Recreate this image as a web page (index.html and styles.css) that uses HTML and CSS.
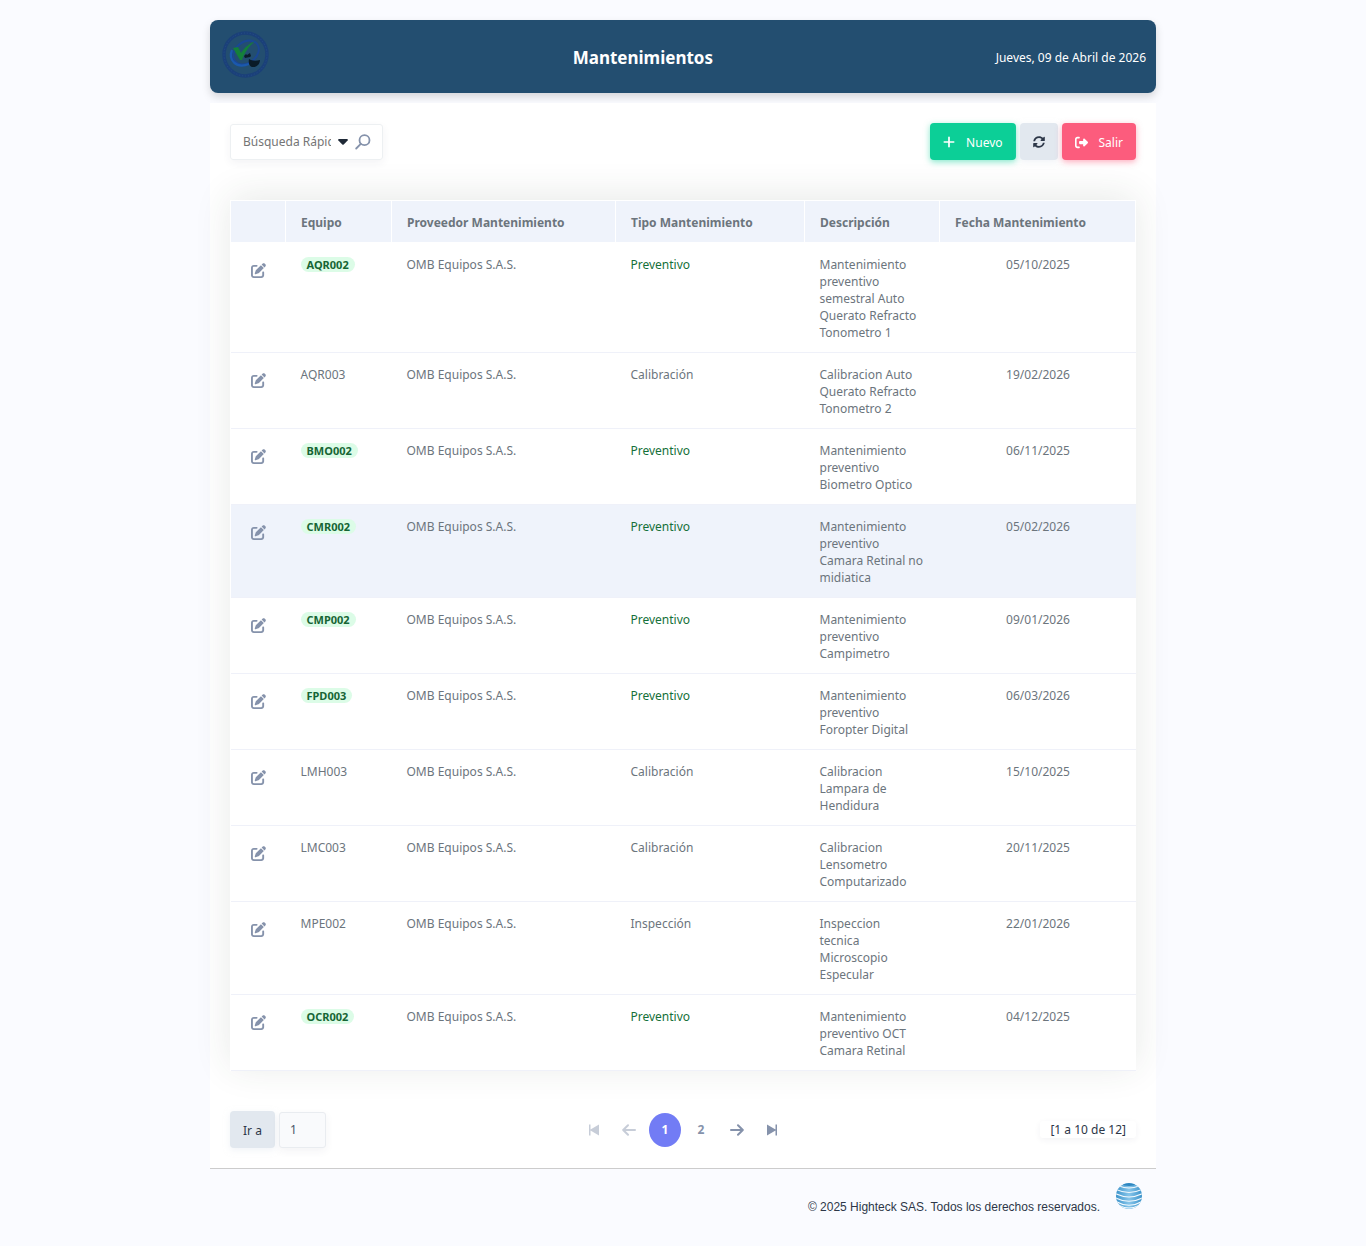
FILE: index.html
```html
<!DOCTYPE html>
<html lang="es">
<head>
  <meta charset="UTF-8" />
  <meta name="viewport" content="width=device-width, initial-scale=1" />
  <title>Mantenimientos</title>
  <link rel="stylesheet" href="styles.css">
</head>
<body>

  <svg class="sprite" aria-hidden="true">
    <symbol id="i-edit" viewBox="0 0 512 512"><path d="M471.6 21.7c-21.9-21.9-57.3-21.9-79.2 0L362.3 51.7l97.9 97.9 30.1-30.1c21.9-21.9 21.9-57.3 0-79.2L471.6 21.7zm-299.2 220c-6.1 6.1-10.8 13.6-13.5 21.9l-29.6 88.8c-2.9 8.6-.6 18.1 5.8 24.6s15.9 8.7 24.6 5.8l88.8-29.6c8.2-2.7 15.7-7.4 21.9-13.5L437.7 172.3 339.7 74.3 172.4 241.7zM96 64C43 64 0 107 0 160V416c0 53 43 96 96 96H352c53 0 96-43 96-96V320c0-17.7-14.3-32-32-32s-32 14.3-32 32v96c0 17.7-14.3 32-32 32H96c-17.7 0-32-14.3-32-32V160c0-17.7 14.3-32 32-32h96c17.7 0 32-14.3 32-32s-14.3-32-32-32H96z"/></symbol>
  </svg>

  <div class="page">
    <header class="header">
      <div class="logo">
        <svg width="50" height="50" viewBox="0 0 50 50" role="img" aria-label="Logo">
          <circle cx="25.500" cy="24.500" r="21.500" fill="none" stroke="#1b4079" stroke-width="3.400"/>
          <circle cx="25.500" cy="24.500" r="21.500" fill="none" stroke="#25508a" stroke-width="1" stroke-dasharray="1 2"/>
          <ellipse cx="26" cy="22.500" rx="14" ry="10.500" transform="rotate(-38 26 22.500)" fill="none" stroke="#1a4796" stroke-width="2"/>
          <path d="M12 20c-4 10 4 19 17 14" fill="none" stroke="#1b59ad" stroke-width="2.200"/>
          <path d="M13 18l5-1 3 6c4-6 8-9 14-12-6 5-10 11-13 19h-2z" fill="#14803a"/>
          <path d="M24 26l2-2 1 1 3-2 1 3-1 1-5 1zM29 29c3 2 7 2 11 1 0 4-3 7-7 7-3 0-5-3-4-8z" fill="#0a1b28"/>
        </svg>
      </div>
      <h1>Mantenimientos</h1>
      <span class="date">Jueves, 09 de Abril de 2026</span>
    </header>

    <main class="content">
      <div class="toolbar">
        <div class="search">
          <input type="text" placeholder="Búsqueda Rápida" aria-label="Búsqueda Rápida">
          <button type="button" aria-label="Campos de búsqueda">
            <svg width="10" height="6" viewBox="0 0 10 6"><path d="M1 0h8c.8 0 1.100.8.600 1.400L5.700 5.500a1 1 0 0 1-1.400 0L.4 1.400C-.1.800.2 0 1 0z" fill="#1f2937"/></svg>
          </button>
          <button type="button" aria-label="Buscar">
            <svg width="16" height="16" viewBox="0 0 16 16" fill="none" stroke="#8592ab" stroke-width="1.800" stroke-linecap="round"><circle cx="9.500" cy="6.200" r="5"/><path d="M5.800 9.900L1.200 14.500"/></svg>
          </button>
        </div>
        <div class="actions">
          <button type="button" class="btn btn-new">
            <svg width="12" height="14" viewBox="0 0 448 512" fill="currentColor"><path d="M256 80c0-17.700-14.300-32-32-32s-32 14.300-32 32V224H48c-17.700 0-32 14.300-32 32s14.300 32 32 32H192V432c0 17.700 14.300 32 32 32s32-14.300 32-32V288H400c17.700 0 32-14.300 32-32s-14.300-32-32-32H256V80z"/></svg>
            Nuevo
          </button>
          <button type="button" class="btn btn-light" aria-label="Actualizar">
            <svg width="12" height="12" viewBox="0 0 512 512" fill="currentColor"><path d="M370.72 133.28C339.458 104.008 298.888 87.962 255.848 88c-77.458.068-144.328 53.178-162.791 126.85-1.344 5.363-6.122 9.15-11.651 9.15H24.103c-7.498 0-13.194-6.807-11.807-14.176C33.933 94.924 134.813 8 256 8c66.448 0 126.791 26.136 171.315 68.685L463.03 40.97C478.149 25.851 504 36.559 504 57.941V192c0 13.255-10.745 24-24 24H345.941c-21.382 0-32.09-25.851-16.971-40.971l41.75-41.749zM32 296h134.059c21.382 0 32.09 25.851 16.971 40.971l-41.75 41.75c31.262 29.273 71.835 45.319 114.876 45.28 77.418-.07 144.315-53.144 162.787-126.849 1.344-5.363 6.122-9.15 11.651-9.15h57.304c7.498 0 13.194 6.807 11.807 14.176C478.067 417.076 377.187 504 256 504c-66.448 0-126.791-26.136-171.315-68.685L48.97 471.03C33.851 486.149 8 475.441 8 454.059V320c0-13.255 10.745-24 24-24z"/></svg>
          </button>
          <button type="button" class="btn btn-exit">
            <svg width="13" height="13" viewBox="0 0 512 512" fill="currentColor"><path d="M377.9 105.9L500.7 228.7c7.2 7.2 11.3 17.1 11.3 27.3s-4.1 20.1-11.3 27.3L377.9 406.1c-6.4 6.4-15 9.9-24 9.9c-18.7 0-33.9-15.2-33.9-33.9l0-62.1-128 0c-17.7 0-32-14.3-32-32l0-64c0-17.7 14.3-32 32-32l128 0 0-62.1c0-18.7 15.2-33.9 33.9-33.9c9 0 17.6 3.6 24 9.9zM160 96L96 96c-17.7 0-32 14.3-32 32l0 256c0 17.7 14.3 32 32 32l64 0c17.7 0 32 14.3 32 32s-14.3 32-32 32l-64 0c-53 0-96-43-96-96L0 128C0 75 43 32 96 32l64 0c17.7 0 32 14.3 32 32s-14.3 32-32 32z"/></svg>
            Salir
          </button>
        </div>
      </div>

      <table class="grid">
        <colgroup>
          <col class="c-edit"><col class="c-equipo"><col class="c-prov"><col class="c-tipo"><col class="c-desc"><col>
        </colgroup>
        <thead>
          <tr>
            <th></th>
            <th>Equipo</th>
            <th>Proveedor Mantenimiento</th>
            <th>Tipo Mantenimiento</th>
            <th>Descripción</th>
            <th>Fecha Mantenimiento</th>
          </tr>
        </thead>
        <tbody>
          <tr>
            <td><a href="#" class="edit" aria-label="Editar"><svg><use href="#i-edit"/></svg></a></td>
            <td><span class="badge">AQR002</span></td>
            <td>OMB Equipos S.A.S.</td>
            <td class="preventivo">Preventivo</td>
            <td>Mantenimiento preventivo semestral Auto Querato Refracto Tonometro 1</td>
            <td class="fecha">05/10/2025</td>
          </tr>
          <tr>
            <td><a href="#" class="edit" aria-label="Editar"><svg><use href="#i-edit"/></svg></a></td>
            <td>AQR003</td>
            <td>OMB Equipos S.A.S.</td>
            <td>Calibración</td>
            <td>Calibracion Auto Querato Refracto Tonometro 2</td>
            <td class="fecha">19/02/2026</td>
          </tr>
          <tr>
            <td><a href="#" class="edit" aria-label="Editar"><svg><use href="#i-edit"/></svg></a></td>
            <td><span class="badge">BMO002</span></td>
            <td>OMB Equipos S.A.S.</td>
            <td class="preventivo">Preventivo</td>
            <td>Mantenimiento preventivo Biometro Optico</td>
            <td class="fecha">06/11/2025</td>
          </tr>
          <tr class="active">
            <td><a href="#" class="edit" aria-label="Editar"><svg><use href="#i-edit"/></svg></a></td>
            <td><span class="badge">CMR002</span></td>
            <td>OMB Equipos S.A.S.</td>
            <td class="preventivo">Preventivo</td>
            <td>Mantenimiento preventivo Camara Retinal no midiatica</td>
            <td class="fecha">05/02/2026</td>
          </tr>
          <tr>
            <td><a href="#" class="edit" aria-label="Editar"><svg><use href="#i-edit"/></svg></a></td>
            <td><span class="badge">CMP002</span></td>
            <td>OMB Equipos S.A.S.</td>
            <td class="preventivo">Preventivo</td>
            <td>Mantenimiento preventivo Campimetro</td>
            <td class="fecha">09/01/2026</td>
          </tr>
          <tr>
            <td><a href="#" class="edit" aria-label="Editar"><svg><use href="#i-edit"/></svg></a></td>
            <td><span class="badge">FPD003</span></td>
            <td>OMB Equipos S.A.S.</td>
            <td class="preventivo">Preventivo</td>
            <td>Mantenimiento preventivo Foropter Digital</td>
            <td class="fecha">06/03/2026</td>
          </tr>
          <tr>
            <td><a href="#" class="edit" aria-label="Editar"><svg><use href="#i-edit"/></svg></a></td>
            <td>LMH003</td>
            <td>OMB Equipos S.A.S.</td>
            <td>Calibración</td>
            <td>Calibracion Lampara de Hendidura</td>
            <td class="fecha">15/10/2025</td>
          </tr>
          <tr>
            <td><a href="#" class="edit" aria-label="Editar"><svg><use href="#i-edit"/></svg></a></td>
            <td>LMC003</td>
            <td>OMB Equipos S.A.S.</td>
            <td>Calibración</td>
            <td>Calibracion Lensometro Computarizado</td>
            <td class="fecha">20/11/2025</td>
          </tr>
          <tr>
            <td><a href="#" class="edit" aria-label="Editar"><svg><use href="#i-edit"/></svg></a></td>
            <td>MPE002</td>
            <td>OMB Equipos S.A.S.</td>
            <td>Inspección</td>
            <td>Inspeccion<br>tecnica Microscopio Especular</td>
            <td class="fecha">22/01/2026</td>
          </tr>
          <tr>
            <td><a href="#" class="edit" aria-label="Editar"><svg><use href="#i-edit"/></svg></a></td>
            <td><span class="badge">OCR002</span></td>
            <td>OMB Equipos S.A.S.</td>
            <td class="preventivo">Preventivo</td>
            <td>Mantenimiento preventivo OCT Camara Retinal</td>
            <td class="fecha">04/12/2025</td>
          </tr>
        </tbody>
      </table>

      <div class="pager">
        <div class="goto">
          <button type="button" class="btn btn-light">Ir a</button>
          <input type="text" value="1" aria-label="Página">
        </div>
        <nav class="pages" aria-label="Paginación">
          <button type="button" class="edge" disabled aria-label="Primera"><svg width="12" height="12" viewBox="0 0 12 12"><path d="M1 .5v11h1.500V6.500L11 11.500V.5L2.500 5.500V.5z"/></svg></button>
          <button type="button" disabled aria-label="Anterior"><svg width="14" height="12" viewBox="0 0 14 12" class="line"><path d="M13 6H1.500M6 1.200L1.200 6 6 10.800"/></svg></button>
          <button type="button" class="current">1</button>
          <button type="button">2</button>
          <button type="button" aria-label="Siguiente"><svg width="14" height="12" viewBox="0 0 14 12" class="line"><path d="M1 6h11.500M8 1.200L12.800 6 8 10.800"/></svg></button>
          <button type="button" class="edge" aria-label="Última"><svg width="12" height="12" viewBox="0 0 12 12"><path d="M11 .5v11H9.500V6.500L1 11.500V.5l8.500 5V.5z"/></svg></button>
        </nav>
        <span class="counter">[1 a 10 de 12]</span>
      </div>
    </main>

    <footer class="footer">
      <span>© 2025 Highteck SAS. Todos los derechos reservados.</span>
      <svg width="26" height="26" viewBox="0 0 26 26" role="img" aria-label="Highteck">
        <defs>
          <linearGradient id="globe" x1="0" y1="0" x2="1" y2="0">
            <stop offset="0" stop-color="#3d94cb"/><stop offset=".5" stop-color="#86c5ea"/><stop offset="1" stop-color="#3d94cb"/>
          </linearGradient>
          <clipPath id="ball"><circle cx="13" cy="13" r="13"/></clipPath>
        </defs>
        <g clip-path="url(#ball)">
          <rect width="26" height="26" fill="url(#globe)"/>
          <ellipse cx="13" cy="1.500" rx="6" ry="1.500" fill="#2f86c0"/>
          <path d="M3 3q10 4 20 0M0 6.500q13 6 26 0M-1 10.500q14 7 28 0M-1 14.500q14 7.500 28 0M0 18.500q13 7.500 26 0M2 22q11 6 22 0" fill="none" stroke="#f3f9fd" stroke-width="1.100"/>
        </g>
      </svg>
    </footer>
  </div>

</body>
</html>
```
FILE: styles.css
```css
* {
  box-sizing: border-box;
}
body {
  margin: 0;
  padding: 20px;
  background: #fafbff;
  color: #2d3748;
  font-family: "Noto Sans", "Open Sans", sans-serif;
  font-size: 12px;
  line-height: 17px;
}
button, input {
  font: inherit;
}
button {
  cursor: pointer;
}
.sprite {
  display: none;
}
.page {
  max-width: 946px;
  margin: 0 auto;
}

/* Header */
.header {
  display: flex;
  justify-content: space-between;
  align-items: center;
  padding: 10px;
  margin-bottom: 10px;
  background: #234e70;
  color: #fff;
  border-radius: 8px;
  box-shadow: 0 4px 8px rgba(0,0,0,0.15);
}
.logo {
  width: 70px;
  height: 53px;
}
.header h1 {
  margin: 0;
  padding-top: 2px;
  font-size: 17px;
  line-height: 24px;
}
.date {
  padding-top: 2px;
}

/* Content */
.content {
  padding: 20px;
  background: #fff;
  border-bottom: 1px solid #ccc;
}
.toolbar {
  display: flex;
  justify-content: space-between;
  align-items: center;
  margin-bottom: 40px;
}
.search {
  display: flex;
  align-items: center;
  gap: 7px;
  height: 36px;
  padding: 0 11px 0 12px;
  border: 1px solid #edf0f2;
  border-radius: 3px;
  box-shadow: 0 3px 8px rgba(50,50,93,0.06);
}
.search input {
  width: 88px;
  border: 0;
  padding: 0;
  outline: 0;
  background: none;
}
.search input::placeholder {
  color: #757575;
}
.search button {
  display: flex;
  padding: 0;
  border: 0;
  background: none;
}
.actions {
  display: flex;
  gap: 4px;
}
.btn {
  display: flex;
  align-items: center;
  gap: 11px;
  height: 37px;
  padding: 1px 13px 0;
  border: 0;
  border-radius: 4px;
}
.btn-new {
  background: #0ccf97;
  color: #fff;
  box-shadow: 0 2px 6px rgba(12,207,151,0.5);
}
.btn-light {
  background: #e2e8ef;
  color: #2d3748;
  box-shadow: 0 2px 6px rgba(226,232,239,0.5);
}
.btn-exit {
  background: #fc5c7d;
  color: #fff;
  box-shadow: 0 2px 6px rgba(252,92,125,0.5);
}

/* Table */
.grid {
  width: 100%;
  table-layout: fixed;
  border-collapse: collapse;
  background: #fff;
  color: #6c757d;
  box-shadow: 0 -4px 35px rgba(50,60,50,0.11);
}
.c-edit { width: 55px; }
.c-equipo { width: 106px; }
.c-prov { width: 224px; }
.c-tipo { width: 189px; }
.c-desc { width: 135px; }
.grid th {
  height: 42px;
  padding: 1px 15px 0;
  background: #eff3fb;
  border: 1px solid #fff;
  text-align: left;
}
.grid td {
  padding: 13px 14px 11px 15px;
  vertical-align: top;
  border-bottom: 1px solid #eff1f9;
}
.grid .active {
  background: #eff3fb;
}
.grid .preventivo {
  color: #15703a;
}
.grid .fecha {
  text-align: center;
}
.edit {
  display: flex;
  justify-content: center;
  padding-top: 7px;
}
.edit svg {
  width: 15px;
  height: 15px;
  fill: #8592ab;
}
.badge {
  display: inline-block;
  padding: 0 6px;
  border-radius: 8px;
  background: #dcfce7;
  color: #166534;
  font-size: 11px;
  font-weight: bold;
  line-height: 15px;
}

/* Pager */
.pager {
  display: grid;
  grid-template-columns: 1fr auto 1fr;
  align-items: center;
  margin-top: 40px;
}
.goto {
  display: flex;
  align-items: center;
  gap: 4px;
}
.goto input {
  width: 47px;
  height: 36px;
  padding: 0 10px;
  border: 1px solid #e9ecf0;
  border-radius: 3px;
  background: #f9fafc;
  color: #4a5568;
  box-shadow: 0 3px 8px rgba(50,50,93,0.06);
}
.pages {
  display: flex;
  gap: 4px;
}
.pages button {
  display: flex;
  align-items: center;
  justify-content: center;
  width: 32px;
  height: 34px;
  padding: 0;
  border: 0;
  border-radius: 50%;
  background: none;
  color: #8592ab;
  font-weight: bold;
}
.pages .edge {
  width: 30px;
}
.pages .current {
  background: #727cf5;
  color: #fff;
}
.pages button:disabled {
  opacity: 0.45;
}
.pages svg {
  fill: currentColor;
}
.pages .line {
  fill: none;
  stroke: currentColor;
  stroke-width: 2;
  stroke-linecap: round;
  stroke-linejoin: round;
}
.counter {
  justify-self: end;
  padding: 0 10px;
  border-radius: 3px;
  box-shadow: 0 2px 6px rgba(50,50,93,0.06);
}

/* Footer */
.footer {
  display: flex;
  justify-content: flex-end;
  gap: 16px;
  padding: 14px 14px 0;
  font-family: "Liberation Sans", Arial, sans-serif;
}
.footer span {
  padding-top: 16px;
}
```
